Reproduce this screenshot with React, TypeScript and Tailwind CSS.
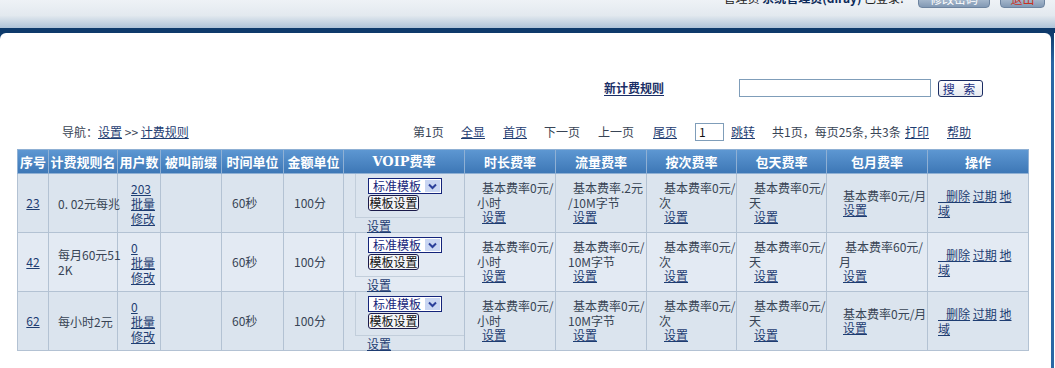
import React from 'react';

const FONT = '"Noto Sans CJK SC", "Noto Sans", sans-serif';

function A({ children, className }: { children: React.ReactNode; className?: string }) {
  return <a className={'text-[#1e3d72] underline underline-offset-[1px] cursor-pointer ' + (className || '')}>{children}</a>;
}

type Row = {
  id: string;
  name: string[];
  users: string;
  dur: string[];
  flow: string[];
  cnt: string[];
  day: string[];
  month: string[];
  monthIndent: number[];
  bg: string;
};

const rows: Row[] = [
  {
    id: '23',
    name: ['0. 02元每兆'],
    users: '203',
    dur: ['基本费率0元/', '小时'],
    flow: ['基本费率.2元', '/10M字节'],
    cnt: ['基本费率0元/', '次'],
    day: ['基本费率0元/', '天'],
    month: ['基本费率0元/月'],
    monthIndent: [4],
    bg: 'bg-[#dbe4ee]',
  },
  {
    id: '42',
    name: ['每月60元51', '2K'],
    users: '0',
    dur: ['基本费率0元/', '小时'],
    flow: ['基本费率0元/', '10M字节'],
    cnt: ['基本费率0元/', '次'],
    day: ['基本费率0元/', '天'],
    month: ['基本费率60元/', '月'],
    monthIndent: [6, 0],
    bg: 'bg-[#e3eaf3]',
  },
  {
    id: '62',
    name: ['每小时2元'],
    users: '0',
    dur: ['基本费率0元/', '小时'],
    flow: ['基本费率0元/', '10M字节'],
    cnt: ['基本费率0元/', '次'],
    day: ['基本费率0元/', '天'],
    month: ['基本费率0元/月'],
    monthIndent: [4],
    bg: 'bg-[#dbe4ee]',
  },
];

function RateCell({ lines }: { lines: string[] }) {
  return (
    <td className="border border-[#b3c2d3] align-middle pl-[12px] pr-[2px]">
      <div className="leading-[14.5px]">
        <div className="pl-[5px] whitespace-nowrap">{lines[0]}</div>
        <div className="whitespace-nowrap">{lines[1]}</div>
        <div className="pl-[5px]">
          <A>设置</A>
        </div>
      </div>
    </td>
  );
}

function Voip() {
  return (
    <td className="border border-[#b3c2d3] align-top p-0 pl-[11px]">
      <div className="border-l border-b border-[#c2cedb] pl-[12px] pt-[4px] pb-[4px] h-[44px]">
        <div className="flex items-stretch w-[74px] h-[16px] border border-[#14247a] bg-white">
          <div className="flex-1 text-[12px] leading-[14px] text-[#14247a] pl-[4px]">标准模板</div>
          <div className="w-[15px] m-[1px] bg-[#c9d6f2] flex items-center justify-center">
            <svg width="9" height="7" viewBox="0 0 9 7">
              <path d="M1 1.5 L4.5 5 L8 1.5" stroke="#2a3f9a" strokeWidth="2" fill="none" />
            </svg>
          </div>
        </div>
        <div className="mt-[1px] w-[51px] h-[16px] border border-[#1a1a4a] rounded-[3px] bg-[#f3f4f8] text-[12px] leading-[14px] text-[#111] text-center">
          模板设置
        </div>
      </div>
      <div className="pl-[12px] leading-[13px] mt-[1px]">
        <A>设置</A>
      </div>
    </td>
  );
}

export default function App() {
  const th = 'border border-[#8fb0d4] text-white font-bold text-[13px] text-center whitespace-nowrap p-0';
  const td = 'border border-[#b3c2d3] align-middle';
  return (
    <div
      className="w-[1055px] h-[368px] overflow-hidden bg-white text-[12px] text-[#384455]"
      style={{ fontFamily: FONT }}
    >
      {/* top bar */}
      <div className="h-[28px] bg-[linear-gradient(to_bottom,#eef2f6_0%,#e3e9ef_55%,#aec3d8_100%)] flex justify-end overflow-hidden">
        <div className="flex items-start -mt-[9px] pr-[10px]">
          <div className="text-[12px] leading-[14px] text-[#222] whitespace-nowrap">
            管理员 <b className="text-[#0c2a5a]">系统管理员(diray)</b> 已登录!
          </div>
          <div className="ml-[14px] w-[72px] h-[17px] rounded-[4px] bg-[linear-gradient(to_bottom,#c9d6e4,#8299b4)] border border-[#6d84a0] text-[12px] text-white text-center leading-[14px]">
            修改密码
          </div>
          <div className="ml-[10px] w-[45px] h-[17px] rounded-[4px] bg-[linear-gradient(to_bottom,#c9d6e4,#8299b4)] border border-[#6d84a0] text-[12px] text-[#c8321e] text-center leading-[14px]">
            退出
          </div>
        </div>
      </div>
      <div className="h-[5px] bg-[#0e3a6b]" />
      <div className="flex bg-[linear-gradient(to_bottom,#0e3a6b_0px,#2a67a5_30px)] h-[335px]">
        <div className="flex-1 bg-white rounded-t-[6px] pt-[46px]">
          {/* search row */}
          <div className="flex items-center h-[18px] pl-[604px]">
            <span className="w-[135px] font-bold underline underline-offset-2 text-[#1a2e66]">新计费规则</span>
            <div className="w-[192px] h-[18px] border border-[#7f9db9] bg-white" />
            <div className="ml-[7px] w-[45px] h-[17px] border border-[#1b2c62] rounded-[3px] bg-[linear-gradient(to_bottom,#ffffff,#e6e9f0)] text-[12px] leading-[15px] text-[#1a2e80] text-center tracking-[3px]">
              搜 索
            </div>
          </div>
          {/* nav row */}
          <div className="flex items-center h-[18px] mt-[26px] pl-[62px] whitespace-nowrap">
            <div className="w-[351px] shrink-0">
              导航：<A>设置</A> &gt;&gt; <A>计费规则</A>
            </div>
            <span className="w-[48px] shrink-0">第1页</span>
            <span className="w-[42px] shrink-0"><A>全显</A></span>
            <span className="w-[41px] shrink-0"><A>首页</A></span>
            <span className="w-[54px] shrink-0">下一页</span>
            <span className="w-[55px] shrink-0">上一页</span>
            <span className="w-[42px] shrink-0"><A>尾页</A></span>
            <span className="w-[36px] shrink-0">
              <div className="w-[29px] h-[18px] border border-[#7f9db9] bg-white text-[12px] leading-[16px] pl-[3px] text-[#111]">1</div>
            </span>
            <span className="w-[41px] shrink-0"><A>跳转</A></span>
            <span className="w-[133px] shrink-0">共1页，每页25条, 共3条</span>
            <span className="w-[42px] shrink-0"><A>打印</A></span>
            <span className="shrink-0"><A>帮助</A></span>
          </div>
          {/* table */}
          <table className="ml-[17px] mt-[8px] table-fixed border-collapse w-[1011px]">
            <colgroup>
              <col className="w-[31px]" />
              <col className="w-[69px]" />
              <col className="w-[43px]" />
              <col className="w-[61px]" />
              <col className="w-[62px]" />
              <col className="w-[60px]" />
              <col className="w-[121px]" />
              <col className="w-[91px]" />
              <col className="w-[91px]" />
              <col className="w-[90px]" />
              <col className="w-[90px]" />
              <col className="w-[101px]" />
              <col className="w-[101px]" />
            </colgroup>
            <thead>
              <tr className="h-[24px] bg-[linear-gradient(to_bottom,#5d97d2,#3c76b5)]">
                <th className={th}>序号</th>
                <th className={th}>计费规则名</th>
                <th className={th}>用户数</th>
                <th className={th}>被叫前缀</th>
                <th className={th}>时间单位</th>
                <th className={th}>金额单位</th>
                <th className={th} style={{ fontFamily: '"DejaVu Serif", ' + FONT }}>VOIP费率</th>
                <th className={th}>时长费率</th>
                <th className={th}>流量费率</th>
                <th className={th}>按次费率</th>
                <th className={th}>包天费率</th>
                <th className={th}>包月费率</th>
                <th className={th}>操作</th>
              </tr>
            </thead>
            <tbody>
              {rows.map((r) => (
                <tr key={r.id} className={'h-[59px] ' + r.bg}>
                  <td className={td + ' text-center'}>
                    <A>{r.id}</A>
                  </td>
                  <td className={td + ' pl-[9px] leading-[15px]'}>
                    {r.name.map((n) => (
                      <div key={n} className="whitespace-nowrap">{n}</div>
                    ))}
                  </td>
                  <td className={td + ' pl-[13px] leading-[15px]'}>
                    <div><A>{r.users}</A></div>
                    <div><A>批量</A></div>
                    <div><A>修改</A></div>
                  </td>
                  <td className={td}></td>
                  <td className={td + ' pl-[10px]'}>60秒</td>
                  <td className={td + ' pl-[10px]'}>100分</td>
                  <Voip />
                  <RateCell lines={r.dur} />
                  <RateCell lines={r.flow} />
                  <RateCell lines={r.cnt} />
                  <RateCell lines={r.day} />
                  <td className={td + ' pl-[12px]'}>
                    <div className="leading-[14.5px]">
                      {r.month.map((m, i) => (
                        <div key={m} className="whitespace-nowrap" style={{ paddingLeft: r.monthIndent[i] }}>
                          {m}
                        </div>
                      ))}
                      <div className="pl-[4px]">
                        <A>设置</A>
                      </div>
                    </div>
                  </td>
                  <td className={td + ' pl-[10px] leading-[15px]'}>
                    <div className="whitespace-nowrap">
                      <A>&nbsp;&nbsp;&nbsp;删除</A> <A>过期</A> <A>地</A>
                    </div>
                    <div>
                      <A>域</A>
                    </div>
                  </td>
                </tr>
              ))}
            </tbody>
          </table>
        </div>
        <div className="w-[3px]" />
        <div className="w-[1px] bg-white" />
      </div>
    </div>
  );
}
